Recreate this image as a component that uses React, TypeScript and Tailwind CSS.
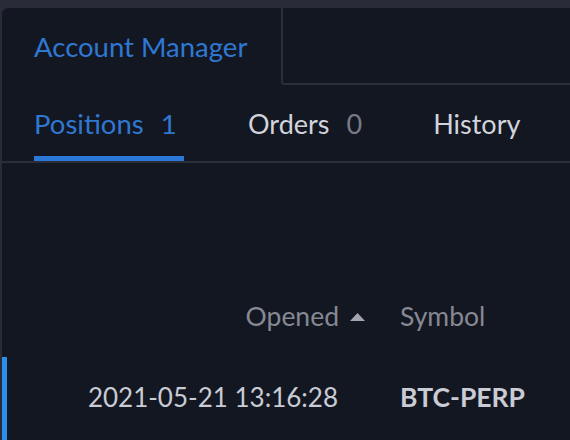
import React from 'react';

const font = { fontFamily: '"Trebuchet MS", Lato, "Open Sans", sans-serif' };

const App: React.FC = () => {
  return (
    <div className="w-[570px] h-[440px] overflow-hidden bg-[#292c38] pt-2 pl-[2px]" style={font}>
      <div className="h-full bg-[#131722] rounded-tl-[6px] flex flex-col">
        {/* widget tabs */}
        <div className="flex h-[77px] shrink-0">
          <div className="w-[279px] flex items-center pl-[32px]">
            <span className="text-[27.5px] text-[#2f78d2]">Account Manager</span>
          </div>
          <div className="flex-1 border-l-2 border-b-2 border-[#2a2e39] rounded-bl-[3px]" />
        </div>

        {/* sub tabs */}
        <div className="flex h-[78px] shrink-0 items-end border-b-2 border-[#2a2e39] pl-[32px]">
          <div className="flex flex-col w-[150px]">
            <div className="flex items-center gap-[17px] text-[27.5px] text-[#2f78d2] h-[60px] pb-[4px]">
              <span>Positions</span>
              <span>1</span>
            </div>
            <div className="h-[5px] bg-[#2b78d8]" />
          </div>
          <div className="flex items-center gap-[17px] text-[27px] h-[65px] pb-[9px] ml-[64px]">
            <span className="text-[#d1d4dc]">Orders</span>
            <span className="text-[#787b86]">0</span>
          </div>
          <div className="flex items-center text-[27px] h-[65px] pb-[9px] ml-[71px]">
            <span className="text-[#d1d4dc]">History</span>
          </div>
        </div>

        {/* table header */}
        <div className="flex items-center h-[80px] mt-[114px] shrink-0 text-[26.5px]">
          <div className="w-[398px] flex items-center justify-end pr-[35px] gap-[11px] text-[#868993]">
            <span>Opened</span>
            <svg width="15" height="8" viewBox="0 0 15 8">
              <path d="M7.5 0 L15 8 L0 8 Z" fill="#a3a6af" />
            </svg>
          </div>
          <div className="text-[#868993]">Symbol</div>
        </div>

        {/* row */}
        <div className="flex items-center h-[83px] shrink-0 text-[26px] relative">
          <div className="absolute left-0 top-0 bottom-0 w-[5px] bg-[#2d8ee8]" />
          <div className="w-[398px] flex justify-end pr-[62px] pb-[2px] text-[#c9ccd4]">2021-05-21 13:16:28</div>
          <div className="font-bold text-[26.5px] pb-[2px] text-[#c9ccd4]">BTC-PERP</div>
        </div>
      </div>
    </div>
  );
};

export default App;
